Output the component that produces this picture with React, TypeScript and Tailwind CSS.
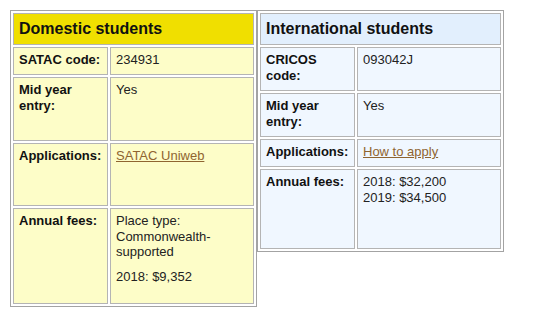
import React from "react";

type Row = {
  label: string;
  h: string;
  value: React.ReactNode;
};

const linkCls = "text-[#8f6430] underline";

const domestic: Row[] = [
  { label: "SATAC code:", h: "h-[28px]", value: "234931" },
  { label: "Mid year entry:", h: "h-[64px]", value: "Yes" },
  {
    label: "Applications:",
    h: "h-[63px]",
    value: (
      <a href="#" className={linkCls}>
        SATAC Uniweb
      </a>
    ),
  },
  {
    label: "Annual fees:",
    h: "h-[96px]",
    value: (
      <>
        <p>Place type: Commonwealth-supported</p>
        <p className="mt-[9px]">2018: $9,352</p>
      </>
    ),
  },
];

const international: Row[] = [
  { label: "CRICOS code:", h: "h-[44px]", value: "093042J" },
  { label: "Mid year entry:", h: "h-[44px]", value: "Yes" },
  {
    label: "Applications:",
    h: "h-[28px]",
    value: (
      <a href="#" className={linkCls}>
        How to apply
      </a>
    ),
  },
  {
    label: "Annual fees:",
    h: "h-[80px]",
    value: (
      <>
        2018: $32,200
        <br />
        2019: $34,500
      </>
    ),
  },
];

const InfoTable = ({
  title,
  rows,
  head,
  cell,
}: {
  title: string;
  rows: Row[];
  head: string;
  cell: string;
}) => {
  return (
    <table className="w-[247px] table-fixed border-separate border-spacing-0.5 border border-[#a3a3a3] bg-white">
      <colgroup>
        <col className="w-[95px]" />
        <col />
      </colgroup>
      <tbody>
        <tr>
          <th
            colSpan={2}
            className={`h-[32px] border border-[#b4b4b4] px-[5px] text-left align-middle text-[16px] font-bold text-[#111] ${head}`}
          >
            {title}
          </th>
        </tr>
        {rows.map((r) => (
          <tr key={r.label}>
            <th
              className={`${r.h} border border-[#b4b4b4] px-[5px] pt-[4px] text-left align-top font-bold text-[#111] ${cell}`}
            >
              {r.label}
            </th>
            <td
              className={`${r.h} border border-[#b4b4b4] px-[5px] pt-[4px] align-top text-[#222] ${cell}`}
            >
              {r.value}
            </td>
          </tr>
        ))}
      </tbody>
    </table>
  );
};

export default function App() {
  return (
    <div className="flex min-h-[320px] items-start bg-white pl-[10px] pt-[10px] font-['Liberation_Sans',Arial,sans-serif] text-[13px] leading-[15.5px]">
      <InfoTable
        title="Domestic students"
        rows={domestic}
        head="bg-[#f0df00]"
        cell="bg-[#fdfdc8]"
      />
      <InfoTable
        title="International students"
        rows={international}
        head="bg-[#e2effd]"
        cell="bg-[#f0f7ff]"
      />
    </div>
  );
}
